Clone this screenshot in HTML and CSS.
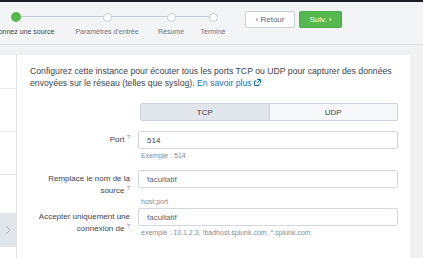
FILE: index.html
```html
<!DOCTYPE html>
<html lang="fr">
<head>
    <meta charset="UTF-8">
    <title>Données TCP / UDP</title>
    <link rel="stylesheet" href="styles.css">
</head>
<body>
    <div class="topbar"></div>

    <div class="header">
        <div class="steps">
            <div class="step step-1 done">
                <span class="dot"></span>
                <span class="step-label">Sélectionnez une source</span>
            </div>
            <div class="step step-2">
                <span class="dot"></span>
                <span class="step-label">Paramètres d'entrée</span>
            </div>
            <div class="step step-3">
                <span class="dot"></span>
                <span class="step-label">Résumé</span>
            </div>
            <div class="step step-4">
                <span class="dot"></span>
                <span class="step-label">Terminé</span>
            </div>
        </div>
        <div class="nav-buttons">
            <button class="btn btn-back">&lsaquo; Retour</button>
            <button class="btn btn-next">Suiv. &rsaquo;</button>
        </div>
    </div>

    <div class="band"></div>

    <div class="main">
        <div class="sidebar">
            <div class="side-row first"></div>
            <div class="side-row"></div>
            <div class="side-row"></div>
            <div class="side-row last"></div>
            <div class="side-toggle">
                <svg width="6" height="10" viewBox="0 0 6 10"><polyline points="1,1 5,5 1,9" fill="none" stroke="#a8b2bd" stroke-width="1"/></svg>
            </div>
        </div>

        <div class="card">
            <p class="intro">
                Configurez cette instance pour écouter tous les ports TCP ou UDP pour capturer des données
                envoyées sur le réseau (telles que syslog). <a href="#">En savoir plus&nbsp;<svg width="7" height="7" viewBox="0 0 7 7"><path d="M3 0.5H6.5V4M6.5 0.5L3 4M5 4.5V6.5H0.5V2H2.5" fill="none" stroke="#1a73b0" stroke-width="1"/></svg></a>
            </p>

            <div class="field">
                <div class="field-label"></div>
                <div class="field-control">
                    <div class="toggle">
                        <span class="toggle-item active">TCP</span>
                        <span class="toggle-item">UDP</span>
                    </div>
                </div>
            </div>

            <div class="field field-port">
                <label class="field-label">Port <sup>?</sup></label>
                <div class="field-control">
                    <input class="text-input" type="text" value="514">
                    <div class="help">Exemple : 514</div>
                </div>
            </div>

            <div class="field field-host">
                <label class="field-label">Remplace le nom de la source <sup>?</sup></label>
                <div class="field-control">
                    <input class="text-input" type="text" placeholder="facultatif">
                    <div class="help help-wide">host:port</div>
                </div>
            </div>

            <div class="field field-accept">
                <label class="field-label">Accepter uniquement une connexion de <sup>?</sup></label>
                <div class="field-control">
                    <input class="text-input" type="text" placeholder="facultatif">
                    <div class="help">exemple : 10.1.2.3, !badhost.splunk.com, *.splunk.com</div>
                </div>
            </div>
        </div>

        <div class="gutter"></div>
    </div>
</body>
</html>
```

FILE: styles.css
```css
* {
    margin: 0;
    padding: 0;
    box-sizing: border-box;
}

body {
    width: 423px;
    height: 258px;
    overflow: hidden;
    background-color: #eff1f3;
    font-family: 'Liberation Sans', Arial, sans-serif;
    color: #3c444d;
}

.topbar {
    height: 2px;
    background-color: #1b1e22;
}

.header {
    height: 43px;
    display: flex;
    align-items: flex-start;
    background-color: #f3f4f6;
    border-bottom: 1px solid #d6dbe0;
}

/* stepper */
.steps {
    position: relative;
    display: flex;
    margin-left: -30px;
}

.steps::before {
    content: '';
    position: absolute;
    top: 14px;
    left: 46px;
    width: 197px;
    height: 1px;
    background-color: #c3cbd4;
}

.step {
    position: relative;
    display: flex;
    flex-direction: column;
    align-items: center;
    padding-top: 10px;
}

.step-1 { width: 92px; }
.step-2 { width: 90px; }
.step-3 { width: 38px; }
.step-4 { width: 46px; }

.dot {
    width: 9px;
    height: 9px;
    border-radius: 50%;
    background-color: #fff;
    border: 1px solid #c3cbd4;
    margin-top: 0.5px;
}

.step.done .dot {
    width: 10px;
    height: 10px;
    margin-top: 0;
    border: none;
    background-color: #53b94f;
}

.step-label {
    margin-top: 5px;
    font-size: 7px;
    line-height: 9px;
    white-space: nowrap;
    color: #6b7785;
}

.step.done .step-label {
    color: #3c444d;
}

.nav-buttons {
    display: flex;
    gap: 4px;
    margin-left: 9px;
    margin-top: 9px;
}

.btn {
    height: 17px;
    font-family: inherit;
    font-size: 8px;
    border-radius: 2px;
    cursor: pointer;
}

.btn-back {
    width: 50px;
    background-color: #fff;
    border: 1px solid #c9d0d7;
    color: #5c6773;
}

.btn-next {
    width: 43px;
    background-color: #53b94f;
    border: 1px solid #4aa847;
    color: #fff;
}

.band {
    height: 10px;
}

/* main area */
.main {
    display: flex;
    height: 203px;
}

.sidebar {
    width: 17px;
    background-color: #fff;
    border-right: 1px solid #e1e5e9;
    display: flex;
    flex-direction: column;
}

.side-row {
    height: 43px;
    border-bottom: 1px solid #e6e9ec;
}

.side-row.first {
    height: 34px;
}

.side-row.last {
    height: 38px;
    border-bottom: none;
}

.side-toggle {
    height: 34px;
    background-color: #e1e6eb;
    display: flex;
    align-items: center;
    justify-content: center;
}

.card {
    flex: 1;
    background-color: #fff;
    padding: 10px 12px 0 13px;
}

.gutter {
    width: 13px;
}

.intro {
    font-size: 8.7px;
    line-height: 12px;
    color: #3c444d;
}

.intro a {
    color: #1a73b0;
    text-decoration: none;
}

/* form rows */
.field {
    display: flex;
    align-items: flex-start;
}

.field-label {
    flex: 1;
    margin-right: 8px;
    text-align: right;
    font-size: 8px;
    line-height: 12px;
    padding-top: 3px;
    color: #3c444d;
}

.field-label sup {
    font-size: 6px;
    line-height: 0;
    color: #6a8aa8;
    vertical-align: 3px;
}

.field-control {
    flex: none;
    width: 260px;
}

.toggle {
    display: flex;
    height: 18px;
    margin-top: 14px;
    margin-left: 2px;
    border: 1px solid #cdd3da;
    border-radius: 2px;
    overflow: hidden;
    font-size: 8px;
}

.toggle-item {
    flex: 1;
    display: flex;
    align-items: center;
    justify-content: center;
    background-color: #f7f8fa;
    color: #3c444d;
}

.toggle-item.active {
    background-color: #e1e6eb;
    border-right: 1px solid #cdd3da;
}

.text-input {
    display: block;
    width: 260px;
    height: 18px;
    border: 1px solid #d3d8de;
    border-radius: 2px;
    padding: 0 8px;
    font-family: inherit;
    font-size: 8px;
    color: #3c444d;
    outline: none;
}

.text-input::placeholder {
    color: #5c6773;
}

.field-port {
    margin-top: 10px;
}

.field-host {
    margin-top: 10px;
}

.field-accept {
    margin-top: 2px;
}

.help {
    margin-top: 2px;
    padding-left: 3px;
    font-size: 7px;
    line-height: 9px;
    color: #818d99;
}

.help.help-wide {
    margin-top: 9px;
}
```
